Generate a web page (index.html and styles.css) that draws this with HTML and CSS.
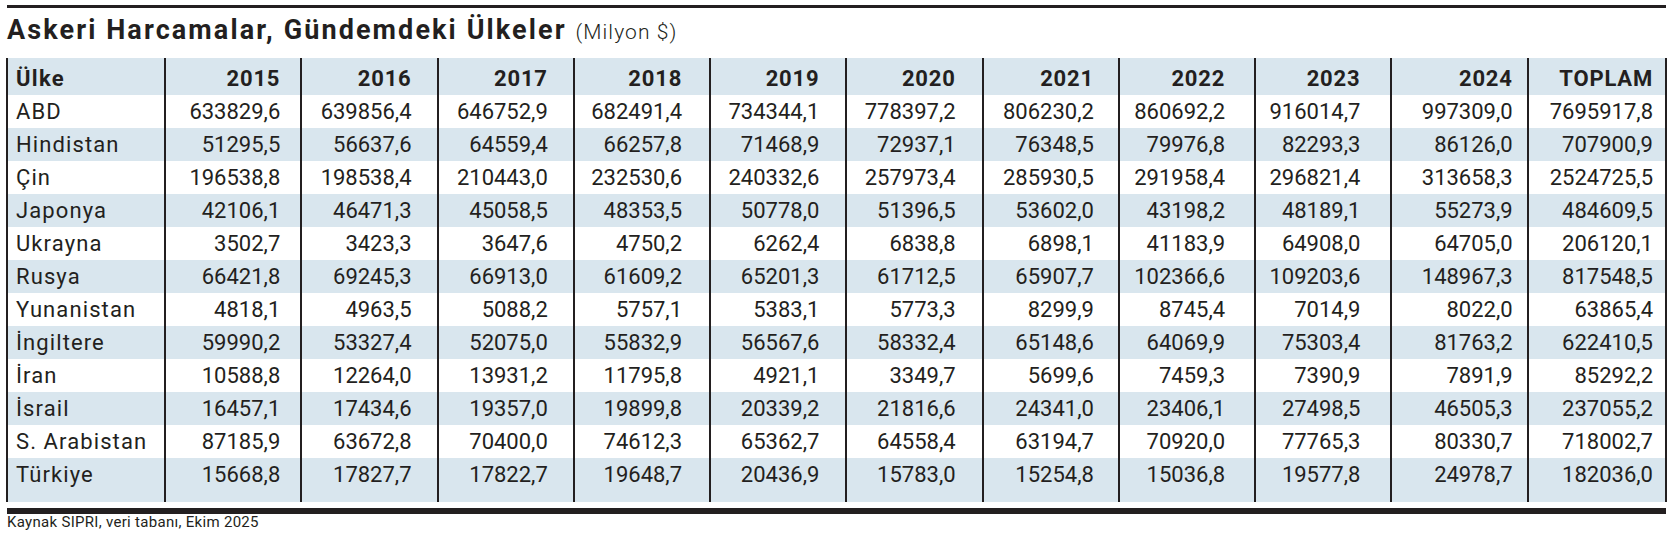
FILE: index.html
```html
<!DOCTYPE html>
<html lang="tr">
<head>
<meta charset="utf-8">
<title>Askeri Harcamalar</title>
<link rel="stylesheet" href="styles.css">
</head>
<body>
<div class="page">
  <div class="rule-top"></div>
  <h1 class="title">Askeri Harcamalar, Gündemdeki Ülkeler <span class="unit">(Milyon $)</span></h1>
  <table class="data">
    <colgroup><col class="col-name"><col><col><col><col><col><col><col><col><col><col><col></colgroup>
    <thead>
      <tr><th>Ülke</th><th>2015</th><th>2016</th><th>2017</th><th>2018</th><th>2019</th><th>2020</th><th>2021</th><th>2022</th><th>2023</th><th>2024</th><th>TOPLAM</th></tr>
    </thead>
    <tbody>
      <tr><td>ABD</td><td>633829,6</td><td>639856,4</td><td>646752,9</td><td>682491,4</td><td>734344,1</td><td>778397,2</td><td>806230,2</td><td>860692,2</td><td>916014,7</td><td>997309,0</td><td>7695917,8</td></tr>
      <tr><td>Hindistan</td><td>51295,5</td><td>56637,6</td><td>64559,4</td><td>66257,8</td><td>71468,9</td><td>72937,1</td><td>76348,5</td><td>79976,8</td><td>82293,3</td><td>86126,0</td><td>707900,9</td></tr>
      <tr><td>Çin</td><td>196538,8</td><td>198538,4</td><td>210443,0</td><td>232530,6</td><td>240332,6</td><td>257973,4</td><td>285930,5</td><td>291958,4</td><td>296821,4</td><td>313658,3</td><td>2524725,5</td></tr>
      <tr><td>Japonya</td><td>42106,1</td><td>46471,3</td><td>45058,5</td><td>48353,5</td><td>50778,0</td><td>51396,5</td><td>53602,0</td><td>43198,2</td><td>48189,1</td><td>55273,9</td><td>484609,5</td></tr>
      <tr><td>Ukrayna</td><td>3502,7</td><td>3423,3</td><td>3647,6</td><td>4750,2</td><td>6262,4</td><td>6838,8</td><td>6898,1</td><td>41183,9</td><td>64908,0</td><td>64705,0</td><td>206120,1</td></tr>
      <tr><td>Rusya</td><td>66421,8</td><td>69245,3</td><td>66913,0</td><td>61609,2</td><td>65201,3</td><td>61712,5</td><td>65907,7</td><td>102366,6</td><td>109203,6</td><td>148967,3</td><td>817548,5</td></tr>
      <tr><td>Yunanistan</td><td>4818,1</td><td>4963,5</td><td>5088,2</td><td>5757,1</td><td>5383,1</td><td>5773,3</td><td>8299,9</td><td>8745,4</td><td>7014,9</td><td>8022,0</td><td>63865,4</td></tr>
      <tr><td>İngiltere</td><td>59990,2</td><td>53327,4</td><td>52075,0</td><td>55832,9</td><td>56567,6</td><td>58332,4</td><td>65148,6</td><td>64069,9</td><td>75303,4</td><td>81763,2</td><td>622410,5</td></tr>
      <tr><td>İran</td><td>10588,8</td><td>12264,0</td><td>13931,2</td><td>11795,8</td><td>4921,1</td><td>3349,7</td><td>5699,6</td><td>7459,3</td><td>7390,9</td><td>7891,9</td><td>85292,2</td></tr>
      <tr><td>İsrail</td><td>16457,1</td><td>17434,6</td><td>19357,0</td><td>19899,8</td><td>20339,2</td><td>21816,6</td><td>24341,0</td><td>23406,1</td><td>27498,5</td><td>46505,3</td><td>237055,2</td></tr>
      <tr><td>S. Arabistan</td><td>87185,9</td><td>63672,8</td><td>70400,0</td><td>74612,3</td><td>65362,7</td><td>64558,4</td><td>63194,7</td><td>70920,0</td><td>77765,3</td><td>80330,7</td><td>718002,7</td></tr>
      <tr class="last"><td>Türkiye</td><td>15668,8</td><td>17827,7</td><td>17822,7</td><td>19648,7</td><td>20436,9</td><td>15783,0</td><td>15254,8</td><td>15036,8</td><td>19577,8</td><td>24978,7</td><td>182036,0</td></tr>
    </tbody>
  </table>
  <div class="rule-bottom"></div>
  <p class="source">Kaynak SIPRI, veri tabanı, Ekim 2025</p>
</div>
</body>
</html>
```
FILE: styles.css
```css
* { box-sizing: border-box; }
html, body { margin: 0; padding: 0; background: #ffffff; }
body {
  font-family: Roboto, "Liberation Sans", sans-serif;
  color: #231f20;
  width: 1675px;
  height: 542px;
  overflow: hidden;
}
.page {
  padding-left: 6px;
  width: 1667px;
}
.rule-top {
  margin-top: 5px;
  margin-left: 1px;
  width: 1659px;
  height: 3px;
  background: #231f20;
}
.title {
  margin: 6px 0 0 1px;
  height: 32px;
  font-size: 27px;
  line-height: 32px;
  font-weight: 700;
  letter-spacing: 2.1px;
  white-space: nowrap;
}
.unit {
  font-weight: 300;
  font-size: 21px;
  letter-spacing: 1.1px;
}
.data {
  margin-top: 12px;
  width: 1661px;
  table-layout: fixed;
  border-collapse: separate;
  border-spacing: 0;
  border-left: 2px solid #231f20;
  border-right: 2px solid #231f20;
  font-size: 22px;
}
.col-name { width: 158px; }
.data th, .data td {
  padding: 0 20px 0 8px;
  text-align: right;
  white-space: nowrap;
  border-right: 2px solid #231f20;
}
.data th:last-child, .data td:last-child { border-right: 0; }
.data th:first-child, .data td:first-child { text-align: left; letter-spacing: 1.1px; }
.data th:first-child { letter-spacing: 1.3px; }
.data th {
  font-weight: 700;
  height: 37px;
  line-height: 32px;
  padding-top: 5px;
  letter-spacing: 0.8px;
  background: #d9e6ee;
}
.data td {
  font-weight: 400;
  height: 33px;
  line-height: 33px;
}
.data tbody tr:nth-child(even) td { background: #d9e6ee; }
.data tr.last td { height: 44px; padding-bottom: 11px; }

.data tr > :nth-child(2) { padding-right: 20px; }
.data tr > :nth-child(3) { padding-right: 25px; }
.data tr > :nth-child(4) { padding-right: 25px; }
.data tr > :nth-child(5) { padding-right: 27px; }
.data tr > :nth-child(6) { padding-right: 26px; }
.data tr > :nth-child(7) { padding-right: 26px; }
.data tr > :nth-child(8) { padding-right: 24px; }
.data tr > :nth-child(9) { padding-right: 29px; }
.data tr > :nth-child(10) { padding-right: 30px; }
.data tr > :nth-child(11) { padding-right: 14px; }
.data tr > :nth-child(12) { padding-right: 12px; }

.rule-bottom {
  margin-top: 6px;
  margin-left: 1px;
  width: 1659px;
  height: 6px;
  background: #231f20;
}
.source {
  margin: 0 0 0 1px;
  font-size: 15px;
  line-height: 17px;
  letter-spacing: 0.3px;
}
```
